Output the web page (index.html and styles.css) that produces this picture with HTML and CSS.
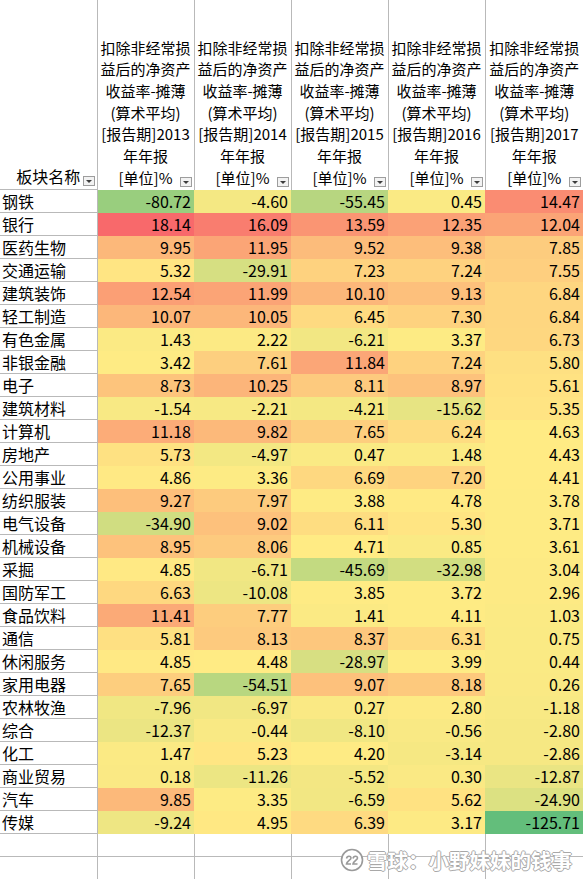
FILE: index.html
```html
<!DOCTYPE html>
<html lang="zh-CN">
<head>
    <meta charset="UTF-8">
    <meta name="viewport" content="width=device-width, initial-scale=1.0">
    <title>板块净资产收益率</title>
    <link rel="stylesheet" href="styles.css">
</head>
<body>
    <table class="sheet">
        <colgroup>
            <col class="col-name">
            <col class="col-val"><col class="col-val"><col class="col-val"><col class="col-val"><col class="col-last">
        </colgroup>
        <thead>
            <tr>
                <th class="hd-name">板块名称<i class="filter"></i></th>
                <th class="hd-val">扣除非经常损<br>益后的净资产<br>收益率-摊薄<br>(算术平均)<br>[报告期]2013<br>年年报<br>[单位]%<i class="filter"></i></th>
                <th class="hd-val">扣除非经常损<br>益后的净资产<br>收益率-摊薄<br>(算术平均)<br>[报告期]2014<br>年年报<br>[单位]%<i class="filter"></i></th>
                <th class="hd-val">扣除非经常损<br>益后的净资产<br>收益率-摊薄<br>(算术平均)<br>[报告期]2015<br>年年报<br>[单位]%<i class="filter"></i></th>
                <th class="hd-val">扣除非经常损<br>益后的净资产<br>收益率-摊薄<br>(算术平均)<br>[报告期]2016<br>年年报<br>[单位]%<i class="filter"></i></th>
                <th class="hd-val">扣除非经常损<br>益后的净资产<br>收益率-摊薄<br>(算术平均)<br>[报告期]2017<br>年年报<br>[单位]%<i class="filter"></i></th>
            </tr>
        </thead>
        <tbody>
            <tr><td class="name">钢铁</td><td class="num">-80.72</td><td class="num">-4.60</td><td class="num">-55.45</td><td class="num">0.45</td><td class="num">14.47</td></tr>
            <tr><td class="name">银行</td><td class="num">18.14</td><td class="num">16.09</td><td class="num">13.59</td><td class="num">12.35</td><td class="num">12.04</td></tr>
            <tr><td class="name">医药生物</td><td class="num">9.95</td><td class="num">11.95</td><td class="num">9.52</td><td class="num">9.38</td><td class="num">7.85</td></tr>
            <tr><td class="name">交通运输</td><td class="num">5.32</td><td class="num">-29.91</td><td class="num">7.23</td><td class="num">7.24</td><td class="num">7.55</td></tr>
            <tr><td class="name">建筑装饰</td><td class="num">12.54</td><td class="num">11.99</td><td class="num">10.10</td><td class="num">9.13</td><td class="num">6.84</td></tr>
            <tr><td class="name">轻工制造</td><td class="num">10.07</td><td class="num">10.05</td><td class="num">6.45</td><td class="num">7.30</td><td class="num">6.84</td></tr>
            <tr><td class="name">有色金属</td><td class="num">1.43</td><td class="num">2.22</td><td class="num">-6.21</td><td class="num">3.37</td><td class="num">6.73</td></tr>
            <tr><td class="name">非银金融</td><td class="num">3.42</td><td class="num">7.61</td><td class="num">11.84</td><td class="num">7.24</td><td class="num">5.80</td></tr>
            <tr><td class="name">电子</td><td class="num">8.73</td><td class="num">10.25</td><td class="num">8.11</td><td class="num">8.97</td><td class="num">5.61</td></tr>
            <tr><td class="name">建筑材料</td><td class="num">-1.54</td><td class="num">-2.21</td><td class="num">-4.21</td><td class="num">-15.62</td><td class="num">5.35</td></tr>
            <tr><td class="name">计算机</td><td class="num">11.18</td><td class="num">9.82</td><td class="num">7.65</td><td class="num">6.24</td><td class="num">4.63</td></tr>
            <tr><td class="name">房地产</td><td class="num">5.73</td><td class="num">-4.97</td><td class="num">0.47</td><td class="num">1.48</td><td class="num">4.43</td></tr>
            <tr><td class="name">公用事业</td><td class="num">4.86</td><td class="num">3.36</td><td class="num">6.69</td><td class="num">7.20</td><td class="num">4.41</td></tr>
            <tr><td class="name">纺织服装</td><td class="num">9.27</td><td class="num">7.97</td><td class="num">3.88</td><td class="num">4.78</td><td class="num">3.78</td></tr>
            <tr><td class="name">电气设备</td><td class="num">-34.90</td><td class="num">9.02</td><td class="num">6.11</td><td class="num">5.30</td><td class="num">3.71</td></tr>
            <tr><td class="name">机械设备</td><td class="num">8.95</td><td class="num">8.06</td><td class="num">4.71</td><td class="num">0.85</td><td class="num">3.61</td></tr>
            <tr><td class="name">采掘</td><td class="num">4.85</td><td class="num">-6.71</td><td class="num">-45.69</td><td class="num">-32.98</td><td class="num">3.04</td></tr>
            <tr><td class="name">国防军工</td><td class="num">6.63</td><td class="num">-10.08</td><td class="num">3.85</td><td class="num">3.72</td><td class="num">2.96</td></tr>
            <tr><td class="name">食品饮料</td><td class="num">11.41</td><td class="num">7.77</td><td class="num">1.41</td><td class="num">4.11</td><td class="num">1.03</td></tr>
            <tr><td class="name">通信</td><td class="num">5.81</td><td class="num">8.13</td><td class="num">8.37</td><td class="num">6.31</td><td class="num">0.75</td></tr>
            <tr><td class="name">休闲服务</td><td class="num">4.85</td><td class="num">4.48</td><td class="num">-28.97</td><td class="num">3.99</td><td class="num">0.44</td></tr>
            <tr><td class="name">家用电器</td><td class="num">7.65</td><td class="num">-54.51</td><td class="num">9.07</td><td class="num">8.18</td><td class="num">0.26</td></tr>
            <tr><td class="name">农林牧渔</td><td class="num">-7.96</td><td class="num">-6.97</td><td class="num">0.27</td><td class="num">2.80</td><td class="num">-1.18</td></tr>
            <tr><td class="name">综合</td><td class="num">-12.37</td><td class="num">-0.44</td><td class="num">-8.10</td><td class="num">-0.56</td><td class="num">-2.80</td></tr>
            <tr><td class="name">化工</td><td class="num">1.47</td><td class="num">5.23</td><td class="num">4.20</td><td class="num">-3.14</td><td class="num">-2.86</td></tr>
            <tr><td class="name">商业贸易</td><td class="num">0.18</td><td class="num">-11.26</td><td class="num">-5.52</td><td class="num">0.30</td><td class="num">-12.87</td></tr>
            <tr><td class="name">汽车</td><td class="num">9.85</td><td class="num">3.35</td><td class="num">-6.59</td><td class="num">5.62</td><td class="num">-24.90</td></tr>
            <tr><td class="name">传媒</td><td class="num">-9.24</td><td class="num">4.95</td><td class="num">6.39</td><td class="num">3.17</td><td class="num">-125.71</td></tr>
            <tr class="empty"><td></td><td></td><td></td><td></td><td></td><td></td></tr>
            <tr class="empty"><td></td><td></td><td></td><td></td><td></td><td></td></tr>
        </tbody>
    </table>

    <div class="watermark">
        <svg class="wm-logo" width="24" height="24" viewBox="0 0 24 24">
            <circle cx="12" cy="12" r="10.5" fill="#fff" stroke="#9a9a9a" stroke-width="1.6"/>
            <path d="M6.5 10.5 C7 7.5 11 7.5 11 10 C11 12 7 13 6.5 16 L11 16" fill="none" stroke="#9a9a9a" stroke-width="1.6"/>
            <path d="M13 10.5 C13.5 7.5 17.5 7.5 17.5 10 C17.5 12 13.5 13 13 16 L17.5 16" fill="none" stroke="#9a9a9a" stroke-width="1.6"/>
        </svg>
        <span class="wm-text">雪球：小野妹妹的钱事</span>
    </div>

    <script>
        // 三色刻度：最小值绿色，中位数黄色，最大值红色
        const green = [99, 190, 123];
        const yellow = [255, 235, 132];
        const red = [248, 105, 107];

        const cells = document.querySelectorAll("td.num");
        const values = Array.from(cells).map(c => parseFloat(c.textContent));
        const sorted = values.slice().sort((a, b) => a - b);
        const n = sorted.length;
        const mid = n % 2 ? sorted[(n - 1) / 2] : (sorted[n / 2 - 1] + sorted[n / 2]) / 2;
        const min = sorted[0];
        const max = sorted[n - 1];

        function mix(a, b, t) {
            return "rgb(" + a.map((v, i) => Math.round(v + (b[i] - v) * t)).join(",") + ")";
        }

        cells.forEach((cell, i) => {
            const v = values[i];
            if (v <= mid) {
                cell.style.backgroundColor = mix(green, yellow, (v - min) / (mid - min));
            } else {
                cell.style.backgroundColor = mix(yellow, red, (v - mid) / (max - mid));
            }
        });
    </script>
</body>
</html>
```

FILE: styles.css
```css
body { margin: 0; width: 583px; height: 879px; position: relative; overflow: hidden; background: #fff; font-family: "Noto Sans CJK SC", sans-serif; color: #000; }
.sheet { border-collapse: collapse; table-layout: fixed; width: 583px; }
.col-name { width: 97px; }
.col-val { width: 97px; }
.col-last { width: 98px; }
.sheet th { position: relative; height: 188px; padding: 0 0 1px; font-weight: normal; font-size: 15px; line-height: 21.7px; text-align: center; vertical-align: bottom; border-right: 1px solid #b9b9b9; }
.sheet th:last-child { border-right: none; }
.sheet .hd-name { font-size: 16px; border-bottom: 1px solid #b9b9b9; }
.filter { position: absolute; right: 2px; bottom: 3px; width: 10px; height: 8px; border: 1px solid #9d9d9d; background: #f2f2f2; }
.filter::after { content: ""; position: absolute; left: 2px; top: 3px; border-left: 3px solid transparent; border-right: 3px solid transparent; border-top: 3px solid #3c3c3c; }
.sheet td { height: 22px; padding: 0 3px 0 2px; font-size: 16px; line-height: 22px; white-space: nowrap; }
.sheet .name { text-align: left; border-right: 1px solid #b9b9b9; border-bottom: 1px solid #b9b9b9; }
.sheet .num { text-align: right; }
.empty td { border-right: 1px solid #b9b9b9; border-bottom: 1px solid #b9b9b9; }
.empty td:last-child { border-right: none; }
.watermark { position: absolute; right: 11px; bottom: 7px; display: flex; align-items: center; gap: 3px; }
.wm-text { font-size: 20.5px; line-height: 24px; font-weight: bold; color: #fff; text-shadow: 1px 0 0 #a8a8a8, -1px 0 0 #a8a8a8, 0 1px 0 #a8a8a8, 0 -1px 0 #a8a8a8; }
```
